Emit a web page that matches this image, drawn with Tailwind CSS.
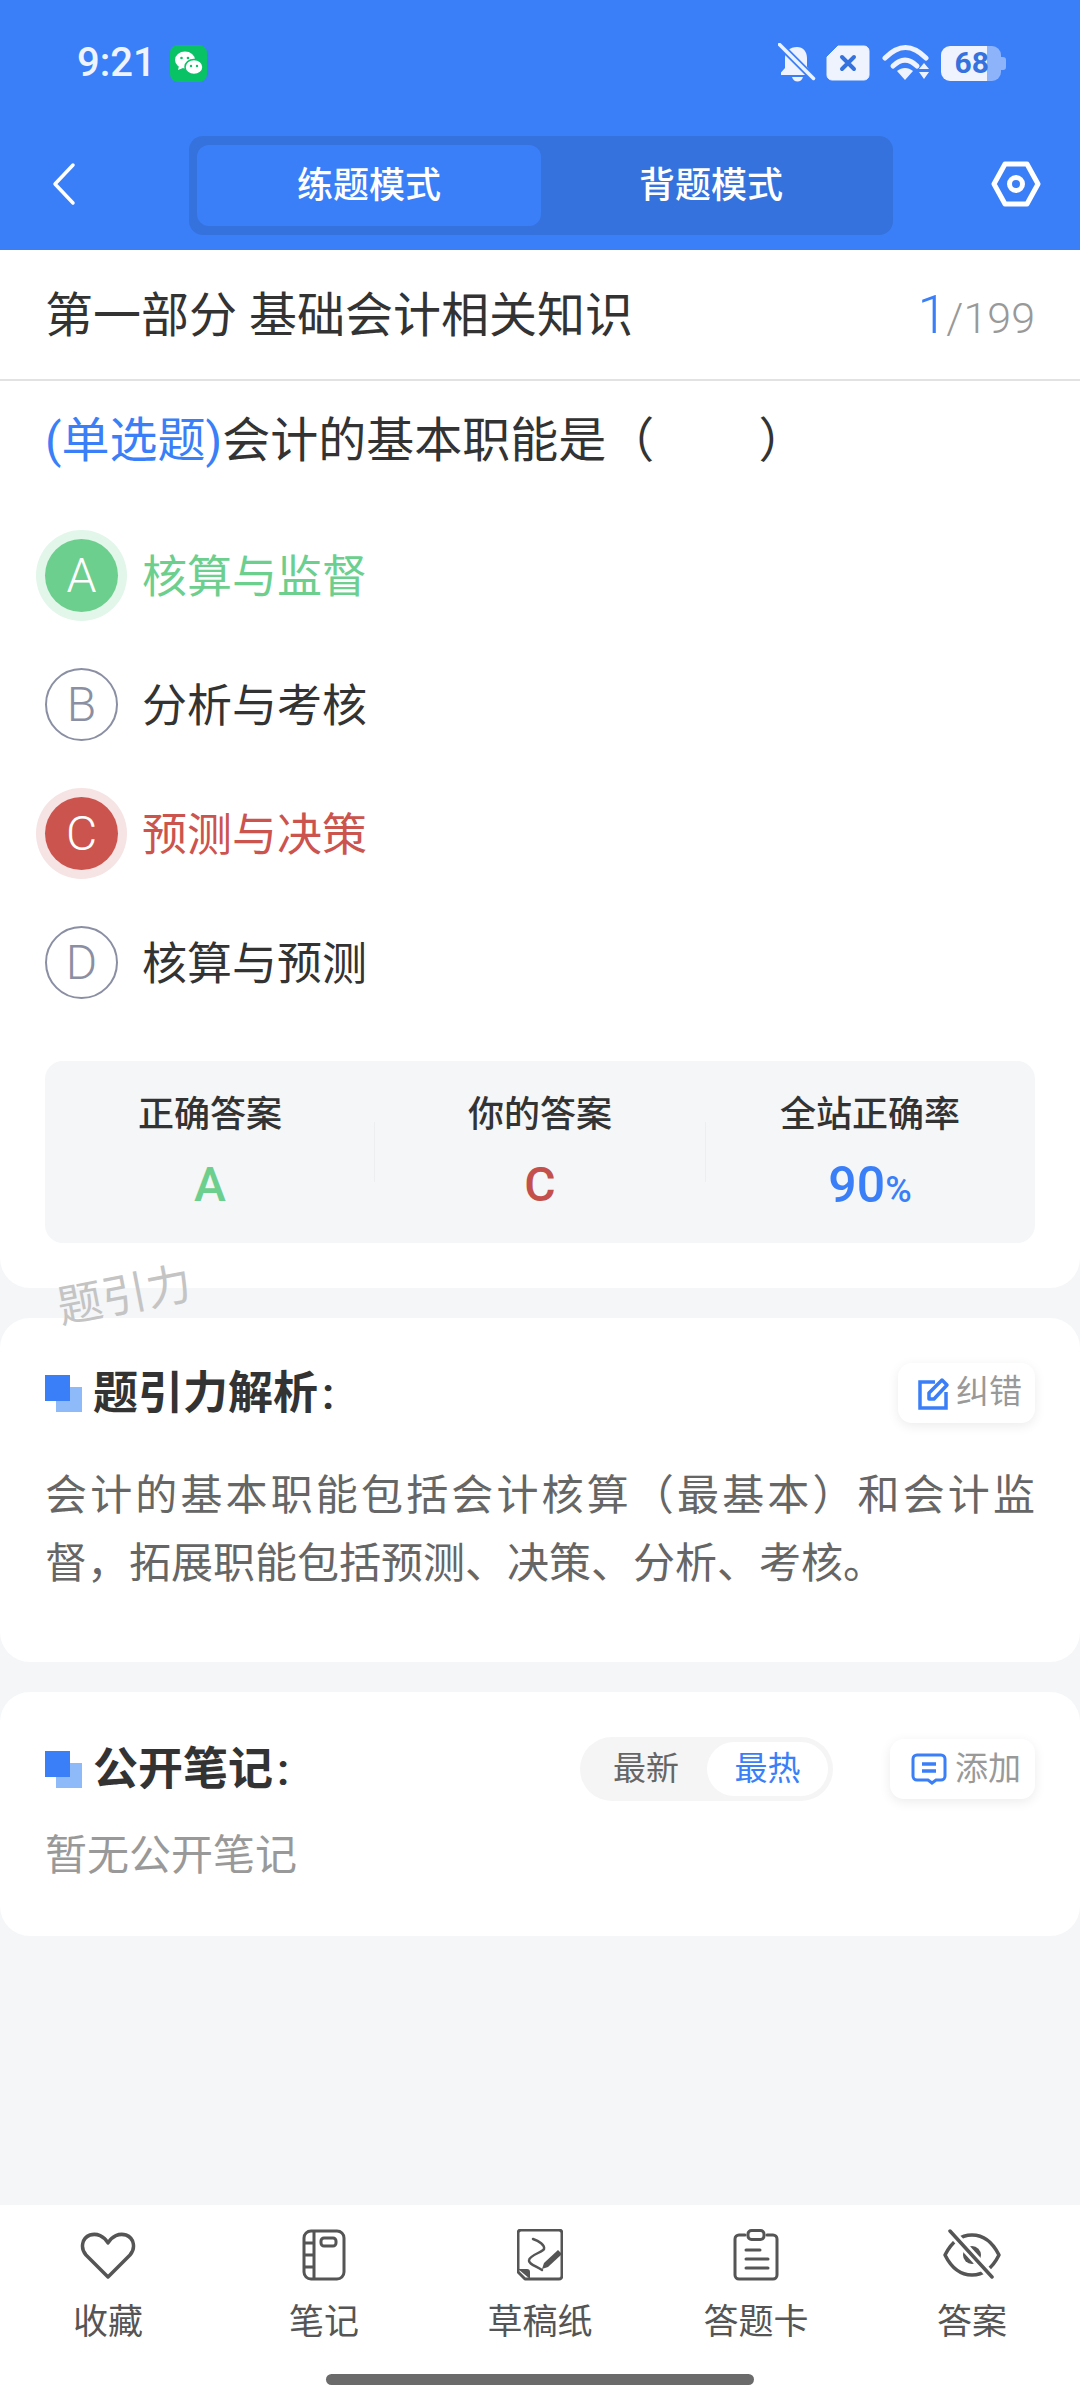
<!DOCTYPE html>
<html lang="zh-CN">
<head>
    <meta charset="UTF-8">
    <meta name="viewport" content="width=device-width, initial-scale=1.0">
    <title>练题模式</title>
    <script src="https://cdn.jsdelivr.net/npm/@tailwindcss/browser@4"></script>
</head>
<body class="bg-[#f4f6f8] text-[#333] [font-family:Roboto,'Noto_Sans_CJK_SC',sans-serif]">
<div class="relative w-[1080px] h-[2400px] flex flex-col overflow-hidden">

    <!-- Header -->
    <header class="bg-[#3b7ff8] h-[250px] shrink-0 text-white">
        <div class="h-[126px] flex items-center pl-[77px] pr-[74px]">
            <span class="text-[40px] font-medium leading-none text-[#eef3fe] w-[93px]">9:21</span>
            <svg class="w-[37px] h-[37px]" viewBox="0 0 37 37">
                <rect width="37" height="37" rx="8" fill="#0ac266"/>
                <ellipse cx="15" cy="15" rx="10" ry="8.5" fill="#fff"/>
                <path d="M9 21l-1 4 5-2z" fill="#fff"/>
                <ellipse cx="24" cy="22" rx="9" ry="7.5" fill="#fff" stroke="#0ac266" stroke-width="1.5"/>
                <circle cx="11.500" cy="13" r="1.300" fill="#0ac266"/><circle cx="18" cy="13" r="1.300" fill="#0ac266"/>
                <circle cx="21" cy="21" r="1.200" fill="#0ac266"/><circle cx="27" cy="21" r="1.200" fill="#0ac266"/>
            </svg>
            <div class="ml-auto flex items-center">
                <svg class="w-[38px] h-[40px]" viewBox="0 0 38 40">
                    <path d="M19 4c6 0 10 4.500 10 11v9l4 5.500v2.500H3v-2.500l4-4.500v-10c0-6.500 5-11 12-11z" fill="#eef3fe"/>
                    <path d="M14 34h11c-1 3-3 4.500-5.500 4.500S15 37 14 34z" fill="#eef3fe"/>
                    <path d="M2 2l33 33" stroke="#3b7ff8" stroke-width="7"/>
                    <path d="M1.500 1.500l34 34" stroke="#eef3fe" stroke-width="3.500" stroke-linecap="round"/>
                </svg>
                <svg class="ml-[10px] w-[44px] h-[36px]" viewBox="0 0 44 36">
                    <path d="M12 1h26a5 5 0 0 1 5 5v24a5 5 0 0 1-5 5H6a5 5 0 0 1-5-5V12z" fill="#eef3fe" stroke="#eef3fe" stroke-linejoin="round"/>
                    <path d="M16 12l12 12M28 12L16 24" stroke="#3572dd" stroke-width="4" stroke-linecap="round"/>
                </svg>
                <svg class="ml-[12px] w-[48px] h-[36px]" viewBox="0 0 48 36">
                    <path d="M3 13C17-1 30-1 44 13" fill="none" stroke="#eef3fe" stroke-width="5" stroke-linecap="round"/>
                    <path d="M11 21c8-8 16-8 24 0" fill="none" stroke="#eef3fe" stroke-width="5" stroke-linecap="round"/>
                    <path d="M15 26c5-4 11-4 16 0l-8 9z" fill="#eef3fe"/>
                    <path d="M37 24l5-6 5 6zM37 27h10l-5 7z" fill="#eef3fe"/>
                </svg>
                <div class="ml-[11px] flex items-center w-[65px] h-[35px]">
                    <div class="flex w-[60px] h-[35px] rounded-[9px] overflow-hidden">
                        <div class="w-[46px] bg-[#eef3fe] flex items-center justify-end overflow-visible">
                            <span class="text-[30px] font-bold leading-none text-[#3572dd] -mr-[2px] relative z-10">68</span>
                        </div>
                        <div class="flex-1 bg-[#8db4fb]"></div>
                    </div>
                    <div class="w-[5px] h-[13px] bg-[#8db4fb] rounded-r-[3px]"></div>
                </div>
            </div>
        </div>
        <div class="flex items-center pt-[10px]">
            <div class="w-[189px] pl-[52px] -mt-[3px]">
                <svg class="w-[24px] h-[44px]" viewBox="0 0 24 44">
                    <path d="M21 3L3 22l18 19" fill="none" stroke="#fff" stroke-width="3.500" stroke-linecap="round" stroke-linejoin="round"/>
                </svg>
            </div>
            <div class="w-[704px] h-[99px] bg-[#3572dd] rounded-[14px] pl-[8px] pt-[9px] flex">
                <div class="w-[344px] h-[81px] bg-[#3b7ff8] rounded-[12px] flex items-center justify-center text-[36px] font-medium">练题模式</div>
                <div class="w-[340px] h-[81px] flex items-center justify-center text-[36px] font-medium">背题模式</div>
            </div>
            <div class="ml-[98px] -mt-[3px]">
                <svg class="w-[50px] h-[46px]" viewBox="0 0 50 46">
                    <path d="M14 3h22l11 20-11 20H14L3 23z" fill="none" stroke="#fff" stroke-width="5" stroke-linejoin="round"/>
                    <circle cx="25" cy="23" r="6.500" fill="none" stroke="#fff" stroke-width="5"/>
                </svg>
            </div>
        </div>
    </header>

    <!-- Question card -->
    <section class="bg-white rounded-b-[30px] h-[1038px] shrink-0">
        <div class="h-[131px] border-b-2 border-[#e2e2e2] px-[45px] flex items-center justify-between">
            <h1 class="pt-[2px] text-[48px] leading-none font-normal">第一部分 基础会计相关知识</h1>
            <div class="flex items-baseline leading-none">
                <span class="text-[54px] font-light text-[#3b7ff8]">1</span>
                <span class="text-[43px] font-light text-[#999] -ml-[1px]">/199</span>
            </div>
        </div>
        <p class="mt-[30px] px-[45px] text-[48px] leading-[60px] whitespace-pre"><span class="text-[#3b7ff8]">(单选题)</span>会计的基本职能是（        <span class="ml-[9px]">）</span></p>

        <div class="mt-[40px] px-[45px] text-[45px]">
            <div class="h-[129px] flex items-center text-[#6ccf8e]">
                <div class="w-[73px] h-[73px] rounded-full bg-[#6ccf8e] ring-[9px] ring-[#e2f6ea] flex items-center justify-center text-white text-[48px] font-light">A</div>
                <span class="ml-[24px] pt-[4px]">核算与监督</span>
            </div>
            <div class="h-[129px] flex items-center">
                <div class="w-[73px] h-[73px] rounded-full border-2 border-[#8a8fa3] flex items-center justify-center text-[#8a8fa3] text-[48px] font-light">B</div>
                <span class="ml-[24px] pt-[4px]">分析与考核</span>
            </div>
            <div class="h-[129px] flex items-center text-[#cc544e]">
                <div class="w-[73px] h-[73px] rounded-full bg-[#cc544e] ring-[9px] ring-[#f6e3e3] flex items-center justify-center text-white text-[48px] font-light">C</div>
                <span class="ml-[24px] pt-[4px]">预测与决策</span>
            </div>
            <div class="h-[129px] flex items-center">
                <div class="w-[73px] h-[73px] rounded-full border-2 border-[#8a8fa3] flex items-center justify-center text-[#8a8fa3] text-[48px] font-light">D</div>
                <span class="ml-[24px] pt-[4px]">核算与预测</span>
            </div>
        </div>

        <div class="mt-[34px] mx-[45px] h-[182px] bg-[#f4f6f8] rounded-[18px] grid grid-cols-3 text-center">
            <div class="pt-[33px]">
                <p class="text-[36px] leading-[42px] font-medium">正确答案</p>
                <p class="mt-[22px] text-[48px] leading-[54px] font-medium text-[#6ccf8e]">A</p>
            </div>
            <div class="pt-[33px] relative">
                <div class="absolute -left-px top-[61px] h-[60px] w-px bg-[#eceef0]"></div>
                <div class="absolute -right-px top-[61px] h-[60px] w-px bg-[#eceef0]"></div>
                <p class="text-[36px] leading-[42px] font-medium">你的答案</p>
                <p class="mt-[22px] text-[48px] leading-[54px] font-medium text-[#c4504c]">C</p>
            </div>
            <div class="pt-[33px]">
                <p class="text-[36px] leading-[42px] font-medium">全站正确率</p>
                <p class="mt-[22px] text-[50px] leading-[54px] font-medium text-[#3b7ff8]">90<span class="text-[36px]">%</span></p>
            </div>
        </div>
    </section>

    <!-- Watermark -->
    <div class="absolute left-[57px] top-[1268px] text-[45px] leading-[56px] text-[#c4c4c4] -rotate-[11deg] z-10">题引力</div>

    <!-- Analysis card -->
    <section class="mt-[30px] bg-white rounded-[30px] h-[344px] shrink-0 px-[45px] pt-[45px]">
        <div class="flex items-center justify-between h-[60px]">
            <div class="flex items-center">
                <svg class="w-[37px] h-[37px]" viewBox="0 0 37 37">
                    <rect x="11" y="12" width="26" height="25" fill="#8fbaf9"/>
                    <rect width="25" height="26" fill="#3b7ff8"/>
                </svg>
                <h2 class="ml-[11px] text-[45px] leading-none font-semibold">题引力解析<span class="ml-[4px]">:</span></h2>
            </div>
            <div class="w-[137px] h-[60px] bg-white rounded-[14px] shadow-[0_3px_12px_rgba(0,0,0,0.08)] flex items-center pl-[20px] text-[33px] text-[#999]">
                <svg class="w-[33px] h-[33px]" viewBox="0 0 33 33">
                    <path d="M17 5H2v26h26V15" fill="none" stroke="#3b7ff8" stroke-width="3.500"/>
                    <path d="M11 22v-6L24 3l5 5-13 14z" fill="none" stroke="#3b7ff8" stroke-width="3.500" stroke-linejoin="round"/>
                </svg>
                <span class="ml-[5px] -mt-[2px]">纠错</span>
            </div>
        </div>
        <p class="mt-[39px] text-[42px] leading-[68px] text-[#666] text-justify">会计的基本职能包括会计核算（最基本）和会计监督，拓展职能包括预测、决策、分析、考核。</p>
    </section>

    <!-- Notes card -->
    <section class="mt-[30px] bg-white rounded-[30px] h-[244px] shrink-0 px-[45px] pt-[45px]">
        <div class="flex items-center h-[64px]">
            <svg class="w-[37px] h-[37px]" viewBox="0 0 37 37">
                <rect x="11" y="12" width="26" height="25" fill="#8fbaf9"/>
                <rect width="25" height="26" fill="#3b7ff8"/>
            </svg>
            <h2 class="ml-[11px] text-[45px] leading-none font-semibold">公开笔记<span class="ml-[4px]">:</span></h2>
            <div class="ml-auto w-[253px] h-[64px] rounded-full bg-[#f5f5f5] flex items-center pl-[5px] text-[33px]">
                <span class="w-[122px] text-center text-[#666]">最新</span>
                <span class="w-[121px] h-[54px] leading-[54px] rounded-full bg-white text-center text-[#3b7ff8]">最热</span>
            </div>
            <div class="ml-[57px] w-[145px] h-[60px] bg-white rounded-[14px] shadow-[0_3px_12px_rgba(0,0,0,0.08)] flex items-center pl-[21px] text-[33px] text-[#999]">
                <svg class="w-[36px] h-[32px]" viewBox="0 0 36 32">
                    <path d="M6 2h24a4 4 0 0 1 4 4v17a4 4 0 0 1-4 4h-5l-4 3-4-3H6a4 4 0 0 1-4-4V6a4 4 0 0 1 4-4z" fill="none" stroke="#3b7ff8" stroke-width="3"/>
                    <path d="M11 11h14M11 18h14" stroke="#3b7ff8" stroke-width="3.500"/>
                </svg>
                <span class="ml-[8px]">添加</span>
            </div>
        </div>
        <p class="mt-[25px] text-[42px] leading-[60px] text-[#999]">暂无公开笔记</p>
    </section>

    <!-- Bottom bar -->
    <footer class="mt-auto bg-white h-[195px] shrink-0 text-[#555]">
        <div class="grid grid-cols-5 pt-[24px]">
            <div class="flex flex-col items-center">
                <svg class="w-[56px] h-[52px]" viewBox="0 0 56 52">
                    <path d="M28 48L6 26C0 19 2 9 10 6c7-2 14 1 18 8 4-7 11-10 18-8 8 3 10 13 4 20z" fill="none" stroke="#555" stroke-width="3.500" stroke-linejoin="round"/>
                </svg>
                <span class="mt-[21px] text-[35px] leading-[42px]">收藏</span>
            </div>
            <div class="flex flex-col items-center">
                <svg class="w-[44px] h-[52px]" viewBox="0 0 44 52">
                    <rect x="2" y="2" width="40" height="48" rx="7" fill="none" stroke="#555" stroke-width="3"/>
                    <path d="M12 2v48M2 14h10M2 26h10M2 38h10" stroke="#555" stroke-width="3" fill="none"/>
                    <rect x="19" y="9" width="15" height="8" rx="3" fill="none" stroke="#555" stroke-width="3"/>
                </svg>
                <span class="mt-[21px] text-[35px] leading-[42px]">笔记</span>
            </div>
            <div class="flex flex-col items-center">
                <svg class="w-[46px] h-[52px]" viewBox="0 0 46 52">
                    <path d="M14 50H8l-7-7V4a3 3 0 0 1 3-3h38a3 3 0 0 1 3 3v43a3 3 0 0 1-3 3z" fill="none" stroke="#555" stroke-width="3" stroke-linejoin="round"/>
                    <path d="M1 40h9a3 3 0 0 1 3 3v7z" fill="#555"/>
                    <path d="M16 10c6 2 12 6 11 10-1 3-14 6-15 11-1 4 7 6 13 10" fill="none" stroke="#555" stroke-width="2.500" stroke-linecap="round"/>
                    <path d="M27 34l14-13 4 4-14 13-6 2z" fill="#555"/>
                </svg>
                <span class="mt-[21px] text-[35px] leading-[42px]">草稿纸</span>
            </div>
            <div class="flex flex-col items-center">
                <svg class="w-[46px] h-[52px]" viewBox="0 0 46 52">
                    <path d="M12 6H6a4 4 0 0 0-4 4v36a4 4 0 0 0 4 4h34a4 4 0 0 0 4-4V10a4 4 0 0 0-4-4h-6" fill="none" stroke="#555" stroke-width="3" stroke-linecap="round"/>
                    <rect x="15" y="1.500" width="16" height="9" rx="3.500" fill="none" stroke="#555" stroke-width="3"/>
                    <path d="M13 21h14M13 30h22M13 39h22" stroke="#555" stroke-width="3" stroke-linecap="round"/>
                </svg>
                <span class="mt-[21px] text-[35px] leading-[42px]">答题卡</span>
            </div>
            <div class="flex flex-col items-center">
                <svg class="w-[58px] h-[52px]" viewBox="0 0 58 52">
                    <path d="M2 26C9 12 18 6 29 6s20 6 27 20c-7 14-16 20-27 20S9 40 2 26z" fill="none" stroke="#555" stroke-width="3.500" stroke-linejoin="round"/>
                    <circle cx="29" cy="26" r="9" fill="#555"/>
                    <path d="M7 2l42 46" stroke="#fff" stroke-width="9"/>
                    <path d="M7 2l42 46" stroke="#555" stroke-width="3.500" stroke-linecap="round"/>
                </svg>
                <span class="mt-[21px] text-[35px] leading-[42px]">答案</span>
            </div>
        </div>
        <div class="mt-[30px] ml-[326px] w-[428px] h-[11px] rounded-full bg-[#6b6b6b]"></div>
    </footer>
</div>
</body>
</html>
